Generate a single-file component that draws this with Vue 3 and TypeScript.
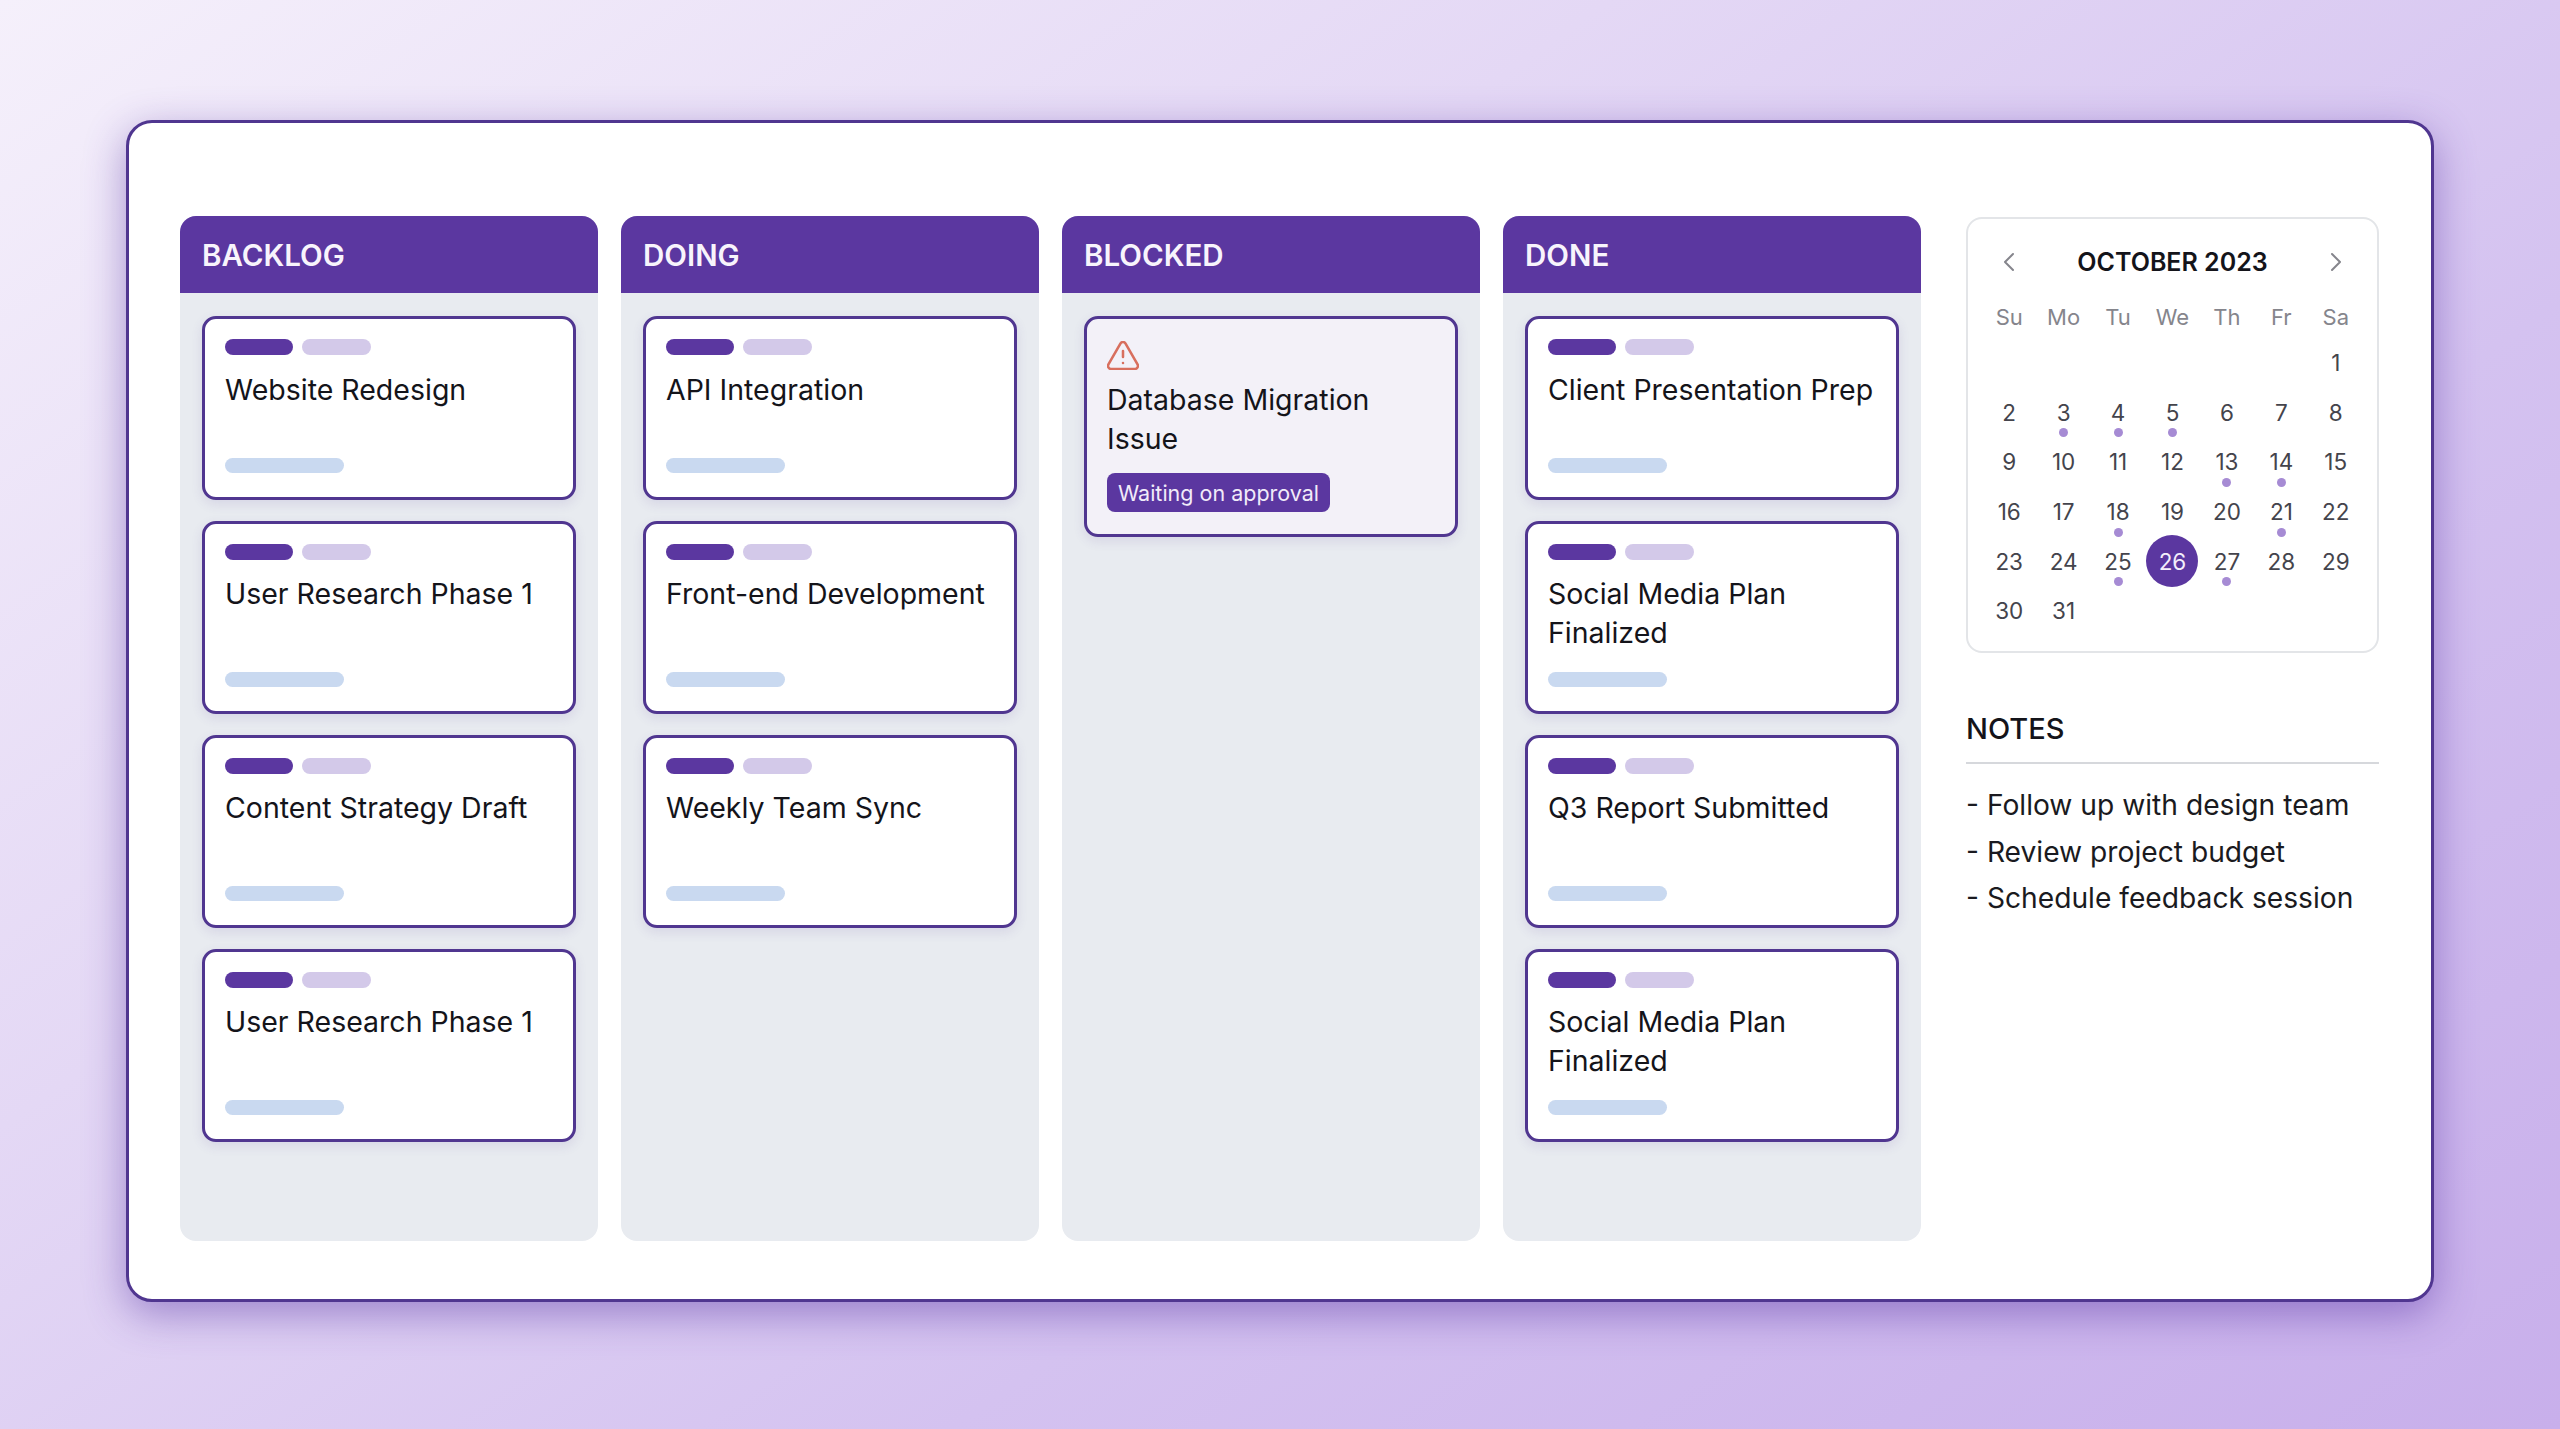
<script setup lang="ts">
interface Card {
  title: string
  blocked?: boolean
  tag?: string
}

interface Column {
  name: string
  cards: Card[]
}

const columns: Column[] = [
  {
    name: 'BACKLOG',
    cards: [
      { title: 'Website Redesign' },
      { title: 'User Research Phase 1' },
      { title: 'Content Strategy Draft' },
      { title: 'User Research Phase 1' },
    ],
  },
  {
    name: 'DOING',
    cards: [
      { title: 'API Integration' },
      { title: 'Front-end Development' },
      { title: 'Weekly Team Sync' },
    ],
  },
  {
    name: 'BLOCKED',
    cards: [{ title: 'Database Migration Issue', blocked: true, tag: 'Waiting on approval' }],
  },
  {
    name: 'DONE',
    cards: [
      { title: 'Client Presentation Prep' },
      { title: 'Social Media Plan Finalized' },
      { title: 'Q3 Report Submitted' },
      { title: 'Social Media Plan Finalized' },
    ],
  },
]

const weekdays = ['Su', 'Mo', 'Tu', 'We', 'Th', 'Fr', 'Sa']
const blanks = 6
const days = Array.from({ length: 31 }, (_, i) => i + 1)
const marked = [3, 4, 5, 13, 14, 18, 21, 25, 27]
const today = 26

const notes = ['- Follow up with design team', '- Review project budget', '- Schedule feedback session']
</script>

<template>
  <div class="page">
    <main class="panel">
      <section class="board">
        <div v-for="col in columns" :key="col.name" class="column">
          <h2 class="column-head">{{ col.name }}</h2>
          <div class="column-body">
            <article
              v-for="(card, i) in col.cards"
              :key="i"
              class="card"
              :class="{ 'card-blocked': card.blocked, 'card-first': i === 0 }"
            >
              <template v-if="card.blocked">
                <svg class="warn" viewBox="1.3 2.3 21.4 19.4" fill="none" stroke="currentColor" stroke-width="1.7" stroke-linecap="round" stroke-linejoin="round">
                  <path d="M21.73 18l-8-14a2 2 0 0 0-3.48 0l-8 14A2 2 0 0 0 4 21h16a2 2 0 0 0 1.73-3Z" />
                  <path d="M12 9v4" />
                  <path d="M12 17h.01" />
                </svg>
                <p class="card-title">{{ card.title }}</p>
                <span class="tag">{{ card.tag }}</span>
              </template>
              <template v-else>
                <div class="pills">
                  <span class="pill pill-dark"></span>
                  <span class="pill pill-light"></span>
                </div>
                <p class="card-title">{{ card.title }}</p>
                <span class="bar"></span>
              </template>
            </article>
          </div>
        </div>
      </section>

      <aside class="side">
        <div class="calendar">
          <div class="cal-head">
            <svg class="chev" viewBox="0 0 12 20" fill="none" stroke="currentColor" stroke-width="2" stroke-linecap="round" stroke-linejoin="round">
              <path d="M10 2L2 10l8 8" />
            </svg>
            <span class="cal-title">OCTOBER 2023</span>
            <svg class="chev" viewBox="0 0 12 20" fill="none" stroke="currentColor" stroke-width="2" stroke-linecap="round" stroke-linejoin="round">
              <path d="M2 2l8 8-8 8" />
            </svg>
          </div>
          <div class="weekdays">
            <span v-for="w in weekdays" :key="w">{{ w }}</span>
          </div>
          <div class="days">
            <span v-for="n in blanks" :key="'b' + n"></span>
            <span v-for="d in days" :key="d" class="day">
              <span class="num" :class="{ today: d === today }">{{ d }}</span>
              <i v-if="marked.includes(d)" class="dot"></i>
            </span>
          </div>
        </div>

        <div class="notes">
          <h3 class="notes-title">NOTES</h3>
          <p v-for="n in notes" :key="n" class="note">{{ n }}</p>
        </div>
      </aside>
    </main>
  </div>
</template>

<style>
html,
body {
  margin: 0;
  padding: 0;
}
</style>

<style scoped>
.page {
  box-sizing: border-box;
  height: 100vh;
  padding: 120px 126px 127px 126px;
  background: linear-gradient(145deg, #f5f0fb 0%, #e4d8f5 35%, #d4c2f0 65%, #c8afeb 100%);
  font-family: Inter, "Liberation Sans", sans-serif;
  color: #14141a;
  overflow: hidden;
}

.panel {
  box-sizing: border-box;
  height: 100%;
  display: flex;
  gap: 45px;
  padding: 93px 52px 58px 51px;
  background: #fff;
  border: 3px solid #503690;
  border-radius: 26px;
  box-shadow: 0 12px 42px rgba(84, 48, 160, 0.48);
}

.board {
  flex: none;
  display: grid;
  grid-template-columns: repeat(4, 418px);
  gap: 23px;
}

.column {
  display: flex;
  flex-direction: column;
  background: #e8ebf0;
  border-radius: 16px;
  overflow: hidden;
}

.column-head {
  margin: 0;
  height: 77px;
  padding: 0 22px;
  display: flex;
  align-items: center;
  background: #5b37a0;
  color: #f8f4fc;
  font-size: 29.5px;
  font-weight: 600;
}

.column-body {
  display: flex;
  flex-direction: column;
  gap: 20.5px;
  padding: 23px 22px;
}

.card {
  box-sizing: border-box;
  min-height: 193.5px;
  display: flex;
  flex-direction: column;
  align-items: flex-start;
  padding: 20px 20px 24px;
  background: #fff;
  border: 3px solid #503690;
  border-radius: 14px;
  box-shadow: 0 4px 12px rgba(80, 54, 144, 0.12);
}

.card-first {
  min-height: 184px;
}

.card-blocked {
  min-height: 221px;
  padding-top: 22px;
  padding-bottom: 22px;
  background: #f3f1f8;
}

.warn {
  width: 32px;
  height: 29px;
  margin-bottom: 10px;
  color: #d86f5e;
}

.pills {
  display: flex;
  gap: 9px;
}

.pill {
  display: block;
  height: 16px;
  border-radius: 8px;
}

.pill-dark {
  width: 68px;
  background: #5b37a0;
}

.pill-light {
  width: 69px;
  background: #d3c9e9;
}

.card-title {
  margin: 14.5px 0 0;
  font-size: 28.5px;
  line-height: 39px;
  color: #14141a;
}

.card-blocked .card-title {
  margin-top: 0;
}

.bar {
  display: block;
  width: 119px;
  height: 15px;
  margin-top: auto;
  border-radius: 8px;
  background: #c9d9f0;
}

.tag {
  margin-top: 15px;
  height: 39px;
  padding: 0 11px;
  display: flex;
  align-items: center;
  background: #5b37a0;
  color: #f1ebf9;
  border-radius: 8px;
  font-size: 21.5px;
}

.side {
  width: 413px;
  flex: none;
  margin-top: 1px;
}

.calendar {
  box-sizing: border-box;
  height: 436px;
  padding: 25px 14px 0;
  border: 2px solid #e3e5e8;
  border-radius: 16px;
  background: #fff;
}

.cal-head {
  height: 36px;
  margin-bottom: 17px;
  padding: 0 21px;
  display: flex;
  align-items: center;
  justify-content: space-between;
  color: #85858c;
}

.chev {
  width: 12px;
  height: 20px;
}

.cal-title {
  font-size: 25px;
  font-weight: 600;
  color: #14141a;
}

.weekdays,
.days {
  display: grid;
  grid-template-columns: repeat(7, 1fr);
  justify-items: center;
  align-items: center;
}

.weekdays {
  height: 40px;
  font-size: 22px;
  color: #85858c;
}

.days {
  grid-auto-rows: 49.7px;
  margin-top: 0.5px;
  font-size: 22.5px;
  color: #44444c;
}

.day {
  position: relative;
  width: 100%;
  height: 100%;
  display: flex;
  align-items: center;
  justify-content: center;
}

.num {
  flex: none;
  display: flex;
  align-items: center;
  justify-content: center;
}

.today {
  width: 52px;
  height: 52px;
  border-radius: 50%;
  background: #5b37a0;
  color: #f4eefb;
}

.dot {
  position: absolute;
  left: 50%;
  top: 41px;
  width: 9px;
  height: 9px;
  margin-left: -4.5px;
  border-radius: 50%;
  background: #a68bd4;
}

.notes {
  margin-top: 58px;
}

.notes-title {
  margin: 0 0 18px;
  padding-bottom: 15px;
  border-bottom: 2px solid #d6d8dc;
  font-size: 29px;
  line-height: 36px;
  font-weight: 500;
  color: #14141a;
}

.note {
  margin: 0;
  font-size: 28.2px;
  line-height: 46.5px;
  color: #1a1a20;
}
</style>
